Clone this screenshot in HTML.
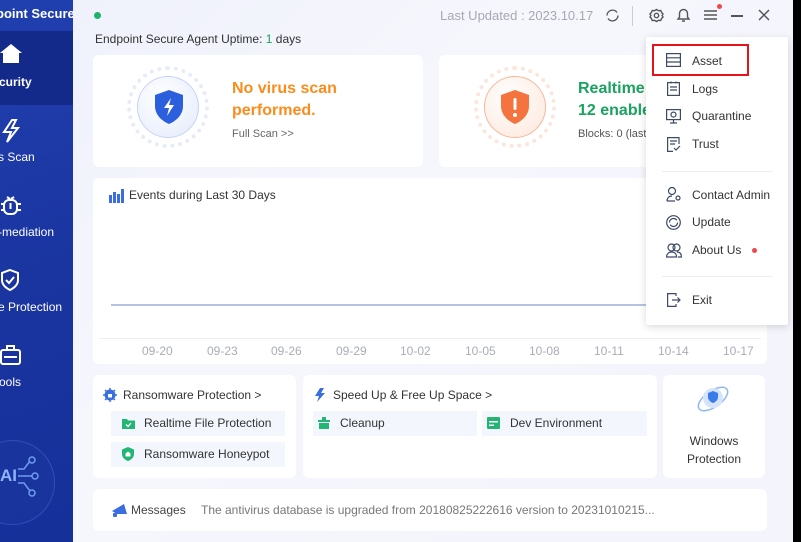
<!DOCTYPE html>
<html><head><meta charset="utf-8"><style>
*{margin:0;padding:0;box-sizing:border-box}
body{width:801px;height:542px;overflow:hidden;background:#000;font-family:"Liberation Sans",sans-serif;position:relative;color:#333}
.abs{position:absolute}
#main{position:absolute;left:0;top:0;width:793px;height:542px;background:linear-gradient(135deg,#eef0fb,#f6f7fd 40%,#f3f4fc)}
#side{position:absolute;left:0;top:0;width:73px;height:542px;background:linear-gradient(160deg,#2140b0,#1a35a0 50%,#16309a);overflow:hidden}
.sl{position:absolute;color:#fff;font-size:12px;white-space:nowrap}
.card{position:absolute;background:#fff;border-radius:6px}
.t{position:absolute;white-space:nowrap}
.mi{position:absolute;left:692px;font-size:12px;color:#333}
.pill{position:absolute;background:#f3f6fd;height:25px;font-size:12px;color:#333;line-height:25px}
</style></head><body>
<div id="main"></div>
<div id="side">
 <div class="sl" style="top:6px;font-size:13px;font-weight:bold;left:-4px">point Secure</div>
 <div class="abs" style="left:0;top:31px;width:73px;height:74px;background:#132a8a"></div>
 <svg class="abs" style="left:0;top:43px" width="22" height="22" viewBox="0 0 22 22"><path d="M0 10 L11 1 L22 10 L19 10 L19 20 L3 20 L3 10Z" fill="#fff"/></svg>
 <div class="sl" style="left:-1px;top:75px;font-weight:bold">curity</div>
 <svg class="abs" style="left:0;top:118px" width="22" height="26" viewBox="0 0 22 26" fill="none" stroke="#fff" stroke-width="2"><path d="M12 2 L4 14 L11 14 L7 24 L18 10 L12 10 L16 2Z"/></svg>
 <div class="sl" style="left:-2px;top:150px">s Scan</div>
 <svg class="abs" style="left:0;top:193px" width="22" height="24" viewBox="0 0 22 24" fill="none" stroke="#fff" stroke-width="2"><rect x="4" y="7" width="13" height="14" rx="5"/><path d="M7 4 L10 6 M14 4 L11 6 M1 11h3M17 11h4M1 17h3M17 17h4M10.5 10v6"/></svg>
 <div class="sl" style="left:-2px;top:225px">-mediation</div>
 <svg class="abs" style="left:0;top:268px" width="22" height="24" viewBox="0 0 22 24" fill="none" stroke="#fff" stroke-width="2"><path d="M10 2 L18 5 L18 12 C18 17 14 20 10 22 C6 20 2 17 2 12 L2 5Z"/><path d="M6 12 L9 15 L14 9"/></svg>
 <div class="sl" style="left:-2px;top:300px">e Protection</div>
 <svg class="abs" style="left:0;top:343px" width="22" height="24" viewBox="0 0 22 24" fill="none" stroke="#fff" stroke-width="2"><rect x="1" y="7" width="19" height="14" rx="2"/><path d="M7 7V3h7v4M4 14h13"/></svg>
 <div class="sl" style="left:-1px;top:375px">ools</div>
 <div class="abs" style="left:-30px;top:440px;width:85px;height:85px;border-radius:50%;border:1px solid rgba(120,160,255,.25);background:rgba(30,60,160,.3)"></div>
 <div class="sl" style="left:0;top:466px;font-size:17px;color:#8fb4ff;font-weight:bold">AI</div>
 <svg class="abs" style="left:18px;top:455px" width="22" height="45" viewBox="0 0 22 45" fill="none" stroke="#6f9cf0" stroke-width="1.5"><path d="M0 21h14M0 14l6 0 6-8M0 28h6l6 8"/><circle cx="17" cy="21" r="3"/><circle cx="14" cy="5" r="3"/><circle cx="14" cy="38" r="3"/></svg>
</div>

<div class="abs" style="left:94px;top:12px;width:7px;height:7px;border-radius:50%;background:#1db36b"></div>
<div class="t" style="left:440px;top:8px;font-size:13px;color:#a6a8b3">Last Updated : 2023.10.17</div>
<svg class="abs" style="left:605px;top:8px" width="15" height="15" viewBox="0 0 15 15" fill="none" stroke="#555" stroke-width="1.4"><path d="M2 7.5A5.5 5.5 0 0 1 12 4.5M13 7.5A5.5 5.5 0 0 1 3 10.5"/></svg>
<div class="abs" style="left:632px;top:6px;width:1px;height:20px;background:#ccc"></div>
<svg class="abs" style="left:649px;top:8px" width="15" height="15" viewBox="0 0 15 15" fill="none" stroke="#555" stroke-width="1.4"><circle cx="7.5" cy="7.5" r="2.2"/><path d="M7.5 1.5l2 1.2 2.2-.2.9 2 1.4 1.5-.9 1.5.9 1.5-1.4 1.5-.9 2-2.2-.2-2 1.2-2-1.2-2.2.2-.9-2L1 9l.9-1.5L1 6l1.4-1.5.9-2 2.2.2z"/></svg>
<svg class="abs" style="left:676px;top:7px" width="15" height="16" viewBox="0 0 15 16" fill="none" stroke="#555" stroke-width="1.4"><path d="M2 12h11L11.5 10V6.5a4 4 0 0 0-8 0V10zM6 14h3"/></svg>
<svg class="abs" style="left:703px;top:9px" width="15" height="12" viewBox="0 0 15 12" stroke="#555" stroke-width="1.6"><path d="M1 2h13M1 6h13M1 10h13"/></svg>
<div class="abs" style="left:717px;top:4px;width:5px;height:5px;border-radius:50%;background:#f04848"></div>
<div class="abs" style="left:731px;top:15px;width:12px;height:1.5px;background:#555"></div>
<svg class="abs" style="left:758px;top:9px" width="12" height="12" viewBox="0 0 12 12" stroke="#555" stroke-width="1.5"><path d="M1 1l10 10M11 1L1 11"/></svg>

<div class="t" style="left:95px;top:32px;font-size:12px;color:#333">Endpoint Secure Agent Uptime: <span style="color:#1aa260">1</span> days</div>

<div class="card" style="left:93px;top:55px;width:330px;height:112px"></div>
<div class="abs" style="left:127px;top:66px;width:82px;height:82px;border-radius:50%;border:4px dotted #e6ebf8"></div>
<div class="abs" style="left:137px;top:76px;width:62px;height:62px;border-radius:50%;border:1px solid #c5d4f5;background:radial-gradient(circle at 40% 35%,#fff,#e3eafb)"></div>
<svg class="abs" style="left:153px;top:89px" width="32" height="36" viewBox="0 0 32 36"><path d="M16 1 L30 6 L30 17 C30 26 23 32 16 35 C9 32 2 26 2 17 L2 6Z" fill="#2c5fdc"/><path d="M18 9 L11 19 L16 19 L14 27 L21 16 L16 16Z" fill="#fff"/></svg>
<div class="t" style="left:232px;top:78px;font-size:16px;font-weight:bold;color:#fb8c1c;line-height:22px">No virus scan<br>performed.</div>
<div class="t" style="left:232px;top:128px;font-size:11px;color:#666">Full Scan &gt;&gt;</div>

<div class="card" style="left:439px;top:55px;width:260px;height:112px"></div>
<div class="abs" style="left:474px;top:66px;width:82px;height:82px;border-radius:50%;border:4px dotted #fbe6dd"></div>
<div class="abs" style="left:484px;top:76px;width:62px;height:62px;border-radius:50%;border:1px solid #f7b79b;background:radial-gradient(circle at 40% 35%,#fff,#fde6da)"></div>
<svg class="abs" style="left:499px;top:89px" width="32" height="36" viewBox="0 0 32 36"><path d="M16 1 L30 6 L30 17 C30 26 23 32 16 35 C9 32 2 26 2 17 L2 6Z" fill="#f4733f"/><rect x="14.5" y="9" width="3" height="12" rx="1.5" fill="#fff"/><circle cx="16" cy="26" r="2" fill="#fff"/></svg>
<div class="t" style="left:578px;top:78px;font-size:16px;font-weight:bold;color:#1aa260;line-height:22px">Realtime<br>12 enable</div>
<div class="t" style="left:578px;top:128px;font-size:11px;color:#555">Blocks: 0 (last</div>

<div class="card" style="left:93px;top:178px;width:674px;height:186px"></div>
<svg class="abs" style="left:109px;top:189px" width="15" height="14" viewBox="0 0 15 14" fill="#3a6ee0"><rect x="0" y="6" width="3" height="8"/><rect x="4" y="3" width="3" height="11"/><rect x="8" y="5" width="3" height="9"/><rect x="12" y="0" width="3" height="14"/></svg>
<div class="t" style="left:129px;top:188px;font-size:12px;color:#333">Events during Last 30 Days</div>
<div class="abs" style="left:111px;top:304px;width:540px;height:2px;background:#b6c3e2"></div>
<div class="abs" style="left:99px;top:338px;width:662px;height:1px;background:#eceef4"></div>
<div class="t" style="left:0;top:344px;font-size:12px;color:#a9adb8">
<span class="abs" style="left:142px">09-20</span><span class="abs" style="left:207px">09-23</span><span class="abs" style="left:271px">09-26</span><span class="abs" style="left:336px">09-29</span><span class="abs" style="left:400px">10-02</span><span class="abs" style="left:465px">10-05</span><span class="abs" style="left:529px">10-08</span><span class="abs" style="left:594px">10-11</span><span class="abs" style="left:658px">10-14</span><span class="abs" style="left:723px">10-17</span></div>

<div class="card" style="left:93px;top:375px;width:203px;height:103px"></div>
<svg class="abs" style="left:103px;top:388px" width="14" height="14" viewBox="0 0 14 14"><circle cx="7" cy="7" r="5.5" fill="#3a6ee0"/><path d="M7 0v2M7 12v2M0 7h2M12 7h2M2 2l1.5 1.5M10.5 10.5L12 12M12 2l-1.5 1.5M2 12l1.5-1.5" stroke="#3a6ee0" stroke-width="1.5"/><rect x="5" y="6" width="4" height="3.5" fill="#fff"/></svg>
<div class="t" style="left:123px;top:388px;font-size:12px;color:#333">Ransomware Protection &gt;</div>
<div class="pill" style="left:111px;top:411px;width:174px;padding-left:33px">Realtime File Protection</div>
<svg class="abs" style="left:122px;top:418px" width="13" height="11" viewBox="0 0 13 11"><path d="M0 1h5l1 1.5h7V11H0z" fill="#22b573"/><path d="M4 6.5l2 2 3-3.5" stroke="#fff" stroke-width="1.3" fill="none"/></svg>
<div class="pill" style="left:111px;top:442px;width:174px;padding-left:33px">Ransomware Honeypot</div>
<svg class="abs" style="left:122px;top:447px" width="12" height="14" viewBox="0 0 12 14"><path d="M6 0L12 2.5V7c0 3.5-3 6-6 7C3 13 0 10.5 0 7V2.5z" fill="#22b573"/><path d="M3.5 6.5L6 4.5l2.5 2V9.5h-5z" fill="#fff"/></svg>

<div class="card" style="left:303px;top:375px;width:354px;height:103px"></div>
<svg class="abs" style="left:314px;top:388px" width="13" height="14" viewBox="0 0 13 14" fill="#3a6ee0"><path d="M6 0L1 8h4L3 14l8-9H7l3-5z"/></svg>
<div class="t" style="left:333px;top:388px;font-size:12px;color:#333">Speed Up &amp; Free Up Space &gt;</div>
<div class="pill" style="left:313px;top:411px;width:164px;padding-left:27px">Cleanup</div>
<svg class="abs" style="left:318px;top:417px" width="12" height="12" viewBox="0 0 12 12" fill="#22b573"><rect x="4" y="0" width="4" height="3"/><rect x="0" y="3" width="12" height="2"/><rect x="1" y="6" width="10" height="6"/></svg>
<div class="pill" style="left:482px;top:411px;width:165px;padding-left:28px">Dev Environment</div>
<svg class="abs" style="left:487px;top:417px" width="13" height="12" viewBox="0 0 13 12"><rect width="13" height="12" rx="1" fill="#22b573"/><rect x="2" y="4" width="9" height="1.5" fill="#fff"/><rect x="2" y="7.5" width="5" height="1.5" fill="#fff"/></svg>

<div class="card" style="left:663px;top:375px;width:102px;height:103px"></div>
<svg class="abs" style="left:694px;top:381px" width="38" height="36" viewBox="0 0 38 36"><ellipse cx="19" cy="18" rx="17" ry="8" fill="none" stroke="#8fb7f5" stroke-width="1.5" transform="rotate(-35 19 18)"/><circle cx="19" cy="17" r="10" fill="#d6e4fb"/><path d="M19 10l5 2v4c0 3-2.5 5-5 6-2.5-1-5-3-5-6v-4z" fill="#3a7bea"/></svg>
<div class="t" style="left:663px;top:432px;width:102px;text-align:center;font-size:12px;color:#333;line-height:18px">Windows<br>Protection</div>

<div class="card" style="left:93px;top:489px;width:674px;height:42px"></div>
<svg class="abs" style="left:110px;top:502px" width="20" height="16" viewBox="0 0 20 16" fill="#3a6ee0"><path d="M2 9L14 2 17 12 7 12z"/><rect x="3" y="11" width="4" height="4" rx="1"/></svg>
<div class="t" style="left:131px;top:503px;font-size:12px;color:#444">Messages</div>
<div class="t" style="left:201px;top:503px;font-size:12px;color:#777">The antivirus database is upgraded from 20180825222616 version to 20231010215...</div>

<div class="abs" style="left:646px;top:37px;width:142px;height:288px;background:#fff;box-shadow:0 2px 8px rgba(0,0,0,.15);border-radius:2px"></div>
<div class="abs" style="left:652px;top:44px;width:97px;height:32px;border:2px solid #e5141b"></div>
<svg class="abs" style="left:666px;top:53px" width="15" height="14" viewBox="0 0 15 14" fill="none" stroke="#3d4a66" stroke-width="1.2"><rect x=".6" y=".6" width="13.8" height="12.8"/><path d="M.6 4.8h13.8M.6 9h13.8"/></svg>
<div class="mi" style="top:54px">Asset</div>
<svg class="abs" style="left:667px;top:81px" width="13" height="15" viewBox="0 0 13 15" fill="none" stroke="#3d4a66" stroke-width="1.2"><rect x=".6" y="1.6" width="11.8" height="12.8"/><path d="M3 6h7M3 9h7M4 .5v2M9 .5v2"/></svg>
<div class="mi" style="top:82px">Logs</div>
<svg class="abs" style="left:666px;top:109px" width="15" height="15" viewBox="0 0 15 15" fill="none" stroke="#3d4a66" stroke-width="1.2"><rect x=".6" y=".6" width="13.8" height="10"/><circle cx="7.5" cy="5.6" r="2.5"/><path d="M7.5 10.6v3M4 14h7"/></svg>
<div class="mi" style="top:109px">Quarantine</div>
<svg class="abs" style="left:667px;top:137px" width="14" height="15" viewBox="0 0 14 15" fill="none" stroke="#3d4a66" stroke-width="1.2"><path d="M12 7V.6H.6v13.8H6M3 4h7M3 7h5M7 11l2 2 4-4"/></svg>
<div class="mi" style="top:137px">Trust</div>
<div class="abs" style="left:662px;top:171px;width:111px;height:1px;background:#eee"></div>
<svg class="abs" style="left:666px;top:186px" width="16" height="16" viewBox="0 0 16 16" fill="none" stroke="#3d4a66" stroke-width="1.2"><circle cx="6" cy="5" r="3.5"/><path d="M1 15c0-3 2-5 5-5M9 15H1"/><circle cx="12" cy="12" r="2"/></svg>
<div class="mi" style="top:188px">Contact Admin</div>
<svg class="abs" style="left:666px;top:215px" width="15" height="15" viewBox="0 0 15 15" fill="none" stroke="#3d4a66" stroke-width="1.2"><circle cx="7.5" cy="7.5" r="6.8"/><path d="M3.5 7.5a4 4 0 0 1 7.3-2.2M11.5 7.5a4 4 0 0 1-7.3 2.2"/></svg>
<div class="mi" style="top:215px">Update</div>
<svg class="abs" style="left:666px;top:243px" width="16" height="15" viewBox="0 0 16 15" fill="none" stroke="#3d4a66" stroke-width="1.2"><circle cx="5.5" cy="4.5" r="3.5"/><circle cx="10.5" cy="4.5" r="3.5"/><path d="M.6 14c0-3 2-5 5-5s5 2 5 5zM11 9c3 0 4.4 2 4.4 5H12"/></svg>
<div class="mi" style="top:243px">About Us</div>
<div class="abs" style="left:752px;top:248px;width:5px;height:5px;border-radius:50%;background:#f04848"></div>
<div class="abs" style="left:662px;top:276px;width:111px;height:1px;background:#eee"></div>
<svg class="abs" style="left:667px;top:293px" width="14" height="14" viewBox="0 0 14 14" fill="none" stroke="#3d4a66" stroke-width="1.2"><path d="M9 3V.6H.6v12.8H9V11M5 7h8M10.5 4.5 13 7l-2.5 2.5"/></svg>
<div class="mi" style="top:293px">Exit</div>
</body></html>
